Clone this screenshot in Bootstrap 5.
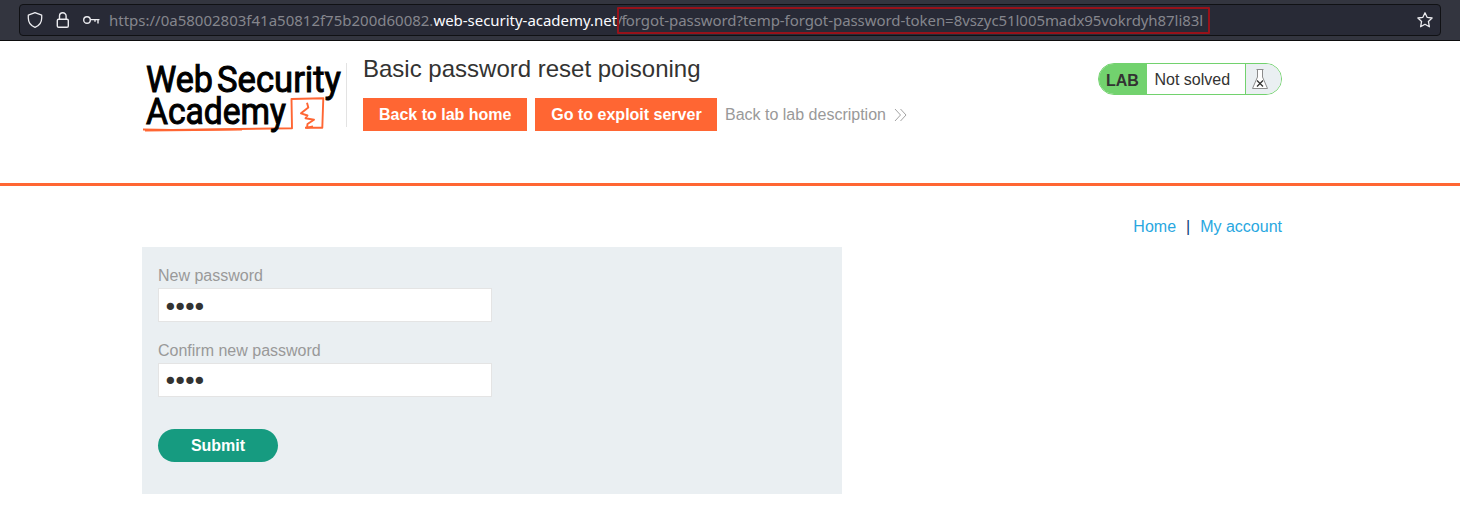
<!DOCTYPE html>
<html lang="en">
<head>
<meta charset="utf-8">
<meta name="viewport" content="width=device-width, initial-scale=1">
<title>Basic password reset poisoning</title>
<link href="https://cdn.jsdelivr.net/npm/bootstrap@5.3.0/dist/css/bootstrap.min.css" rel="stylesheet">
<style>
body { font-family: "Liberation Sans", Arial, sans-serif; font-size: 16px; line-height: 18px; color: #333332; height: 511px; overflow: hidden; }
.toolbar { height: 41px; background: #33353f; border-bottom: 1px solid #0c0c0d; padding: 4px 19px 4px 19px; }
.urlbar { height: 32px; background: #282a36; border: 1px solid #101114; border-radius: 4px; padding: 0 7px 0 7px; }
.urlbar svg { flex-shrink: 0; }
.urltext { font-family: "Noto Sans", sans-serif; font-size: 15px; line-height: 27px; color: #85868d; white-space: pre; margin-left: 9px; }
.urltext b { font-weight: 400; color: #fbfbfe; letter-spacing: -.03px; }
.marked { outline: 2px solid #97121a; outline-offset: -2px; border-radius: 1px; padding-right: 7px; display: inline-block; height: 27px; letter-spacing: -.065px; }
.marked::first-letter { letter-spacing: -1px; }
.page { width: 1140px; margin-left: 142px; }
.lab-header { height: 145px; border-bottom: 3px solid #ff6633; }
.brand { width: 205px; height: 64px; margin-top: 22px; border-right: 1px solid #e3e3e3; }
.brand svg { display: block; overflow: visible; }
.lab-title { font-size: 24px; line-height: 28px; margin: 14px 0 15px; font-weight: 400; }
.btn-lab { background: #ff6633; color: #fff; border-radius: 0; border: 0; font-weight: 700; font-size: 16px; line-height: 18px; padding: 8px 16px 7px; height: 33px; }
.btn-lab + .btn-lab { width: 182px; padding-left: 15px; padding-right: 15px; }
.muted-link { color: #999; text-decoration: none; margin-left: -.5px; }
.lab-status { height: 32px; width: 184px; margin-top: 22px; border: 1px solid #72d26e; border-radius: 16px; overflow: hidden; line-height: 32px; }
.lab-tag { background: #72d26e; width: 48px; padding-left: 7px; font-weight: 700; padding-top: 1px; }
.lab-state { width: 98px; padding-left: 7.5px; }
.lab-flask { flex: 1; background: #eaeff2; border-left: 1px solid #72d26e; }
.top-links { margin-top: 32px; height: 29px; }
.top-links a { color: #29a7df; text-decoration: none; }
.top-links span { color: #0b4477; padding: 0 10px; }
.login-box { width: 700px; height: 247px; background: #eaeff2; padding: 20px 16px; }
.login-box label { display: block; color: #999; height: 21px; }
.login-box .form-control { width: 334px; height: 34px; border: 1px solid #e4e4e4; border-radius: 0; padding: 2px 4px 0; color: #333332; font-family: "DejaVu Sans", sans-serif; font-size: 25px; letter-spacing: -5.05px; margin-bottom: 20px; line-height: 30px; background: #fff; }
.login-box #p1 { padding-top: 4px; }
.btn-submit { background: #169b80; color: #fff; border: 0; border-radius: 17px; width: 120px; height: 33px; font-size: 16px; line-height: 18px; font-weight: 700; padding: 8px 0 7px; margin-top: 12px; }
</style>
</head>
<body>
<div class="toolbar">
  <div class="urlbar d-flex align-items-center">
    <svg width="16" height="18" viewBox="0 0 16 18" fill="none" stroke="#ececf0" stroke-width="1.3" stroke-linejoin="round"><path d="M8 1.600 14.700 4.200V7c0 4.500-2.600 7.800-6.700 9.400C3.900 14.800 1.300 11.500 1.300 7V4.200Z"/></svg>
    <svg class="ms-2" width="24" height="18" viewBox="0 0 24 18" fill="none" stroke="#ececf0" stroke-width="1.400"><rect x="6.300" y="8.200" width="11" height="8.100" rx="1.300"/><path d="M8.500 8V5a3.300 3.300 0 0 1 6.600 0V8"/></svg>
    <svg class="ms-2" width="17" height="18" viewBox="0 0 17 18" fill="none" stroke="#ececf0" stroke-width="1.400"><circle cx="4" cy="9" r="3.300"/><path d="M7.300 8.600H16.500M15 8.600V12.500M12 8.600V10.800"/></svg>
    <span class="urltext">https://0a58002803f41a50812f75b200d60082.<b>web-security-academy.net</b><span class="marked">/forgot-password?temp-forgot-password-token=8vszyc51l005madx95vokrdyh87li83l</span></span>
    <svg class="ms-auto" width="16" height="18" viewBox="0 0 16 18" fill="none" stroke="#ececf0" stroke-width="1.300" stroke-linejoin="round"><path d="M8 1.800 10.100 6.300 15.100 7 11.400 10.400 12.400 15.800 8 13.300 3.600 15.800 4.600 10.400.9 7 5.900 6.300Z"/></svg>
  </div>
</div>

<header class="lab-header">
  <div class="page d-flex">
    <div class="brand flex-shrink-0">
      <svg width="205" height="72" viewBox="0 0 205 72" font-family="Roboto, sans-serif" font-size="36.500" fill="#000" stroke="#000" stroke-width="1">
        <text x="4" y="28.600" textLength="67" lengthAdjust="spacingAndGlyphs">Web</text>
        <text x="75" y="28.600" textLength="124" lengthAdjust="spacingAndGlyphs">Security</text>
        <g fill="none" stroke="#ff6633" stroke-width="1.900" stroke-linejoin="round"><path d="M1 66.500 30 67 150 65.200 149.500 36 181.300 35.300 180.300 64.800 163 64.800"/>
        <path d="M3 67.500 100 66.500"/>
        <path d="M165 39.800 166.300 44.500 159 50.300 165.500 52.500 163.500 55.300 172 56.800 165.500 61 165 64.800 171 63.500"/></g>
        <text x="4" y="61" textLength="140" lengthAdjust="spacingAndGlyphs">Academy</text>
      </svg>
    </div>
    <div class="ms-3 flex-grow-1">
      <h2 class="lab-title">Basic password reset poisoning</h2>
      <div class="d-flex align-items-center gap-2">
        <a class="btn btn-lab" href="#">Back to lab home</a>
        <a class="btn btn-lab" href="#">Go to exploit server</a>
        <a class="muted-link" href="#">Back to lab description<svg class="ms-2" width="13" height="13" viewBox="0 0 13 13" fill="none" stroke="#999" stroke-width=".9"><path d="M1 0 6.500 6 1 12M6.500 0 12 6 6.500 12"/></svg></a>
      </div>
    </div>
    <div class="lab-status d-flex flex-shrink-0">
      <div class="lab-tag">LAB</div>
      <div class="lab-state">Not solved</div>
      <div class="lab-flask"><svg class="d-block" width="32" height="30" viewBox="0 0 32 30" fill="#fff" stroke="#8c8c8c" stroke-width="1"><path d="M11.500 5.500V13L6.500 24.500H21.500L16.500 13V5.500Z"/><path d="M10.500 5.500H17.500"/><path d="M11 16.500 17 22.500M17 16.500 11 22.500" stroke="#333332" stroke-width="1.300"/></svg></div>
    </div>
  </div>
</header>

<main class="page">
  <nav class="top-links d-flex justify-content-end">
    <a href="#">Home</a><span>|</span><a href="#">My account</a>
  </nav>
  <form class="login-box">
    <label for="p1">New password</label>
    <input class="form-control" id="p1" type="password" value="abcd">
    <label for="p2">Confirm new password</label>
    <input class="form-control" id="p2" type="password" value="abcd">
    <button class="btn btn-submit" type="button">Submit</button>
  </form>
</main>
<script src="https://cdn.jsdelivr.net/npm/bootstrap@5.3.0/dist/js/bootstrap.bundle.min.js"></script>
</body>
</html>
